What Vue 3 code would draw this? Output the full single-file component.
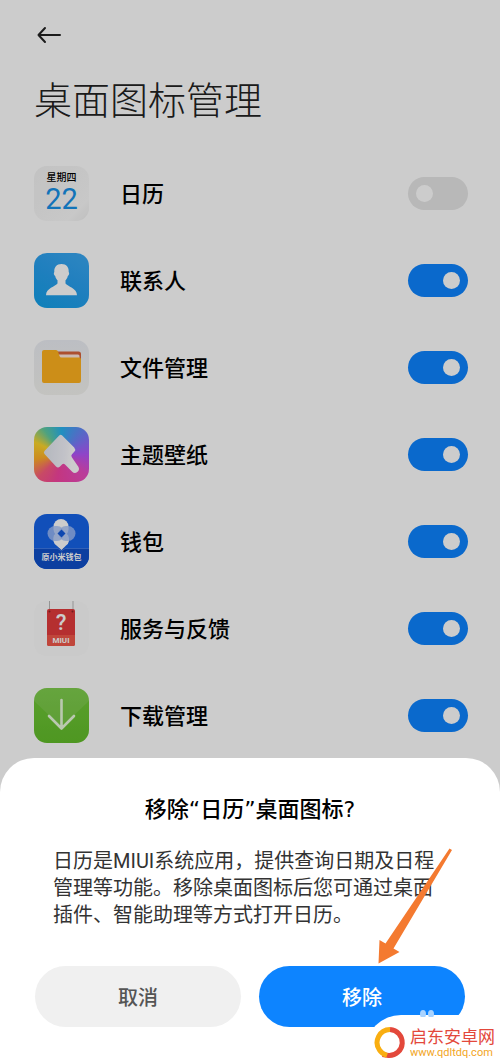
<script setup>
import { ref } from 'vue'

const apps = ref([
  { id: 'calendar', name: '日历', shown: false },
  { id: 'contacts', name: '联系人', shown: true },
  { id: 'files', name: '文件管理', shown: true },
  { id: 'themes', name: '主题壁纸', shown: true },
  { id: 'wallet', name: '钱包', shown: true },
  { id: 'feedback', name: '服务与反馈', shown: true },
  { id: 'downloads', name: '下载管理', shown: true },
])
</script>

<template>
  <div class="screen">
    <main class="page">
      <button class="back" type="button" aria-label="返回">
        <svg width="24" height="18" viewBox="0 0 24 18">
          <path d="M8 2 1.500 9l6.500 7M1.500 9H23" />
        </svg>
      </button>
      <h1>桌面图标管理</h1>

      <ul class="apps">
        <li v-for="app in apps" :key="app.id">
          <span class="icon" :class="app.id">
            <template v-if="app.id === 'calendar'">
              <span class="weekday">星期四</span>
              <span class="day">22</span>
            </template>

            <svg v-else viewBox="0 0 55 55">
              <g v-if="app.id === 'contacts'" fill="#fff">
                <path
                  d="M27.500 11c5 0 7.500 3.500 7.200 8 1 1 .3 3.500-.9 4-.4 2-1.400 3.500-2.300 4.300v3.200c2 3 11.500 4.500 11.500 11.800h-31c0-7.300 9.500-8.800 11.500-11.800v-3.200c-.9-.8-1.900-2.300-2.300-4.300-1.200-.5-1.900-3-.9-4-.3-4.500 2.200-8 7.200-8z"
                />
              </g>

              <g v-else-if="app.id === 'files'">
                <path d="M22 11.500h22.500a2.500 2.500 0 0 1 2.500 2.500v9H22z" fill="#d8643c" />
                <path d="M24 14.500h20q1.500 0 1.500 1.500v6H24z" fill="#ffe9df" />
                <path
                  d="M10 10h12q1.500 0 2 1.500l1.500 4.500q.5 1.500 2 1.500h17.500q2 0 2 2v21.500q0 2-2 2h-35q-2 0-2-2V12q0-2 2-2z"
                  fill="#ffb21f"
                />
              </g>

              <g v-else-if="app.id === 'themes'">
                <defs>
                  <linearGradient id="brush" x1="0" y1="0.6" x2="1" y2="0.7">
                    <stop offset="0" stop-color="#e2e6ee" />
                    <stop offset="0.6" stop-color="#f4f4fb" />
                    <stop offset="0.8" stop-color="#fff" />
                  </linearGradient>
                </defs>
                <path
                  d="M25.200 8.500q1.500-1.500 3 0l12 12q1.800 2 .3 4l-2.500 2.800q-1.500 1.500 0 3.200l6.500 9.500a4 4 0 0 1-6.300 4.700l-7.200-7.200q-1.500-1.500-3 0l-2 2q-2 1.800-4 0l-11.500-12.500q-1.300-1.500 0-3z"
                  fill="url(#brush)"
                />
              </g>

              <g v-else-if="app.id === 'wallet'">
                <path d="M0 34h55v21H0z" fill="#0f4fc9" />
                <path d="M0 34.500h24l3.500 2.500 3.500-2.500h24" fill="none" stroke="#4a83ec" stroke-width="0.8" />
                <rect x="19.500" y="5" width="15" height="18" rx="7.500" fill="#fff" />
                <path d="M20 21q7-6 14 0 3 7-2 10.500L27.500 36 22.500 31.500Q17.500 28 20 21z" fill="#fff" />
                <rect x="13.500" y="12" width="17" height="15" rx="7.500" fill="#a9c3f7" fill-opacity="0.8" />
                <rect x="24.500" y="12" width="17" height="15" rx="7.500" fill="#a9c3f7" fill-opacity="0.8" />
                <path d="M27.500 15.500 31.500 19.500 27.500 23.500 23.500 19.500z" fill="#1259dc" />
                <text x="27.500" y="46" class="wallet-text">原小米钱包</text>
              </g>

              <g v-else-if="app.id === 'feedback'">
                <path d="M15.500 0v10M39 0v10" stroke="#b9b9b9" stroke-width="1" />
                <rect x="13" y="8" width="28" height="37" rx="2" fill="#e33b3d" />
                <path d="M13 34h28v9a2 2 0 0 1-2 2H15a2 2 0 0 1-2-2z" fill="#f0584a" />
                <circle cx="15.500" cy="10.500" r="1" fill="#8e2424" />
                <circle cx="38.500" cy="10.500" r="1" fill="#8e2424" />
                <text x="27" y="29" class="mark">?</text>
                <text x="27" y="42" class="brand">MIUI</text>
              </g>

              <g v-else>
                <path d="M0 0h55v13L27.500 39 0 13z" fill="#fff" fill-opacity="0.1" />
                <path
                  d="M27.500 12v28M15 28l12.500 12.500L40 28"
                  fill="none"
                  stroke="#e9fbdc"
                  stroke-width="2.600"
                  stroke-linecap="round"
                  stroke-linejoin="round"
                />
              </g>
            </svg>
          </span>

          <label :for="app.id">{{ app.name }}</label>
          <input :id="app.id" v-model="app.shown" type="checkbox" role="switch" />
        </li>
      </ul>
    </main>

    <div class="backdrop"></div>

    <section class="sheet" role="dialog" aria-labelledby="sheet-title">
      <h2 id="sheet-title">移除“日历”桌面图标?</h2>
      <p>日历是MIUI系统应用，提供查询日期及日程管理等功能。移除桌面图标后您可通过桌面插件、智能助理等方式打开日历。</p>
      <div class="actions">
        <button class="cancel" type="button">取消</button>
        <button class="remove" type="button">移除</button>
      </div>

      <svg class="pointer" width="76" height="118" viewBox="0 0 76 118">
        <path d="M72.500 1.500 75 3 16.500 101.500 22.500 105 1.500 116.500 2.500 93 8.500 96.500z" />
      </svg>

      <div class="watermark">
        <svg class="paw" width="16" height="8" viewBox="0 0 16 8">
          <ellipse cx="4" cy="5" rx="3" ry="4" />
          <ellipse cx="12" cy="5" rx="3" ry="4" />
        </svg>
        <svg class="logo" width="34" height="36" viewBox="0 0 34 36">
          <path d="M9.500 29.500 15.500 30.500A13 13 0 0 0 17 4.500" stroke="#e3483b" />
          <path d="M17 4.500A13 13 0 0 0 6.500 25Q8.500 28.500 14 30.500" stroke="#f9ae10" />
        </svg>
        <div class="site">
          <strong>启东安卓网</strong>
          <span>www.qdltdq.com</span>
        </div>
      </div>
    </section>
  </div>
</template>

<style>
body {
  margin: 0;
}
</style>

<style scoped>
.screen {
  position: relative;
  min-height: 100vh;
  overflow: hidden;
  background: #fff;
  color: #000;
  font-family: Roboto, "Noto Sans CJK SC", sans-serif;
}

.page {
  padding: 26px 32px 0 34px;
}

button {
  padding: 0;
  border: 0;
  font: inherit;
}

.back {
  display: block;
  height: 18px;
  margin-left: 3px;
  background: none;
}

.back svg {
  display: block;
  fill: none;
  stroke: #222;
  stroke-width: 2;
  stroke-linecap: round;
  stroke-linejoin: round;
}

h1 {
  margin: 32px 0 24px;
  color: #222;
  font-size: 38px;
  font-weight: 300;
  line-height: 50px;
}

.apps {
  margin: 0;
  padding: 0;
  list-style: none;
}

li {
  display: flex;
  align-items: center;
  height: 87px;
}

label {
  flex: 1;
  margin-left: 31px;
  padding-bottom: 4px;
  font-size: 22px;
  font-weight: 500;
}

/* Interrupteurs */
input {
  appearance: none;
  display: flex;
  align-items: center;
  width: 60px;
  height: 33px;
  margin: 0;
  padding: 0 8px;
  box-sizing: border-box;
  border-radius: 17px;
  background: #e6e6e6;
}

input::before {
  content: '';
  width: 17px;
  height: 17px;
  border-radius: 50%;
  background: #fff;
}

input:checked {
  justify-content: flex-end;
  background: #0d84ff;
}

.icon {
  display: flex;
  flex-direction: column;
  align-items: center;
  width: 55px;
  height: 55px;
  overflow: hidden;
  border-radius: 13px;
}

.icon svg {
  width: 55px;
  height: 55px;
}

.calendar {
  background: linear-gradient(135deg, #f3f3f3, #fafafa 80%, #eee);
}

.weekday {
  margin-top: 6px;
  font-size: 10px;
  font-weight: 500;
  line-height: 11px;
}

.day {
  color: #1791e8;
  font-size: 29px;
  line-height: 33px;
}

.contacts {
  background: linear-gradient(30deg, #12a0e8, #279fee 50%, #3ba8f2);
}

.files {
  background: linear-gradient(#eceef4, #f4f4f0);
}

.themes {
  background: conic-gradient(
    #28b4f0,
    #7d78fa 55deg,
    #b455fa 90deg,
    #e94cc0 130deg,
    #f544a0 190deg,
    #fa5c80 225deg,
    #ffae28 260deg,
    #fcd62c 295deg,
    #62cba0 325deg,
    #28b4f0
  );
}

.wallet {
  background: #1663e8;
}

.feedback {
  background: #fdfdfd;
}

.downloads {
  background: linear-gradient(#72c93a, #62bd2a);
}

.wallet-text,
.mark,
.brand {
  fill: #fff;
  font-size: 8px;
  font-weight: 700;
  text-anchor: middle;
}

.mark {
  font-size: 22px;
  font-weight: 500;
}

.backdrop {
  position: absolute;
  inset: 0;
  background: rgba(0, 0, 0, 0.2);
}

.sheet {
  position: absolute;
  right: 0;
  bottom: 0;
  left: 0;
  padding: 37px 35px 36px;
  border-radius: 34px 34px 0 0;
  background: #fff;
}

h2 {
  margin: 0 0 23px;
  font-family: "DejaVu Sans", "Noto Sans CJK SC", sans-serif;
  font-size: 22px;
  font-weight: 500;
  line-height: 30px;
  text-align: center;
}

p {
  margin: 0 28px 37px 18px;
  color: #333;
  font-size: 20px;
  line-height: 27px;
}

.actions {
  display: flex;
  gap: 18px;
}

.actions button {
  flex: 1;
  height: 61px;
  border-radius: 31px;
  font-size: 20px;
  font-weight: 500;
}

.cancel {
  background: #f0f0f0;
  color: #555;
}

.remove {
  background: #0d84ff;
  color: #fff;
}

.pointer {
  position: absolute;
  right: 47px;
  bottom: 98px;
  fill: #f47a30;
}

/* Logo du site, en bas à droite */
.watermark {
  position: absolute;
  right: 0;
  bottom: 0;
  display: flex;
  align-items: center;
  padding: 10px 5px 2px 8px;
  border-radius: 36px 0 0 0;
  background: #fff;
}

.paw {
  position: absolute;
  top: -6px;
  left: 54px;
  fill: #a9d3ff;
}

.logo {
  fill: none;
  stroke-width: 5;
}

.site {
  display: flex;
  flex-direction: column;
  margin-left: 3px;
}

strong {
  color: #e3483b;
  font-size: 17px;
  font-weight: 400;
  line-height: 20px;
}

.site span {
  color: #f2a51d;
  font-size: 11px;
  line-height: 12px;
}
</style>
